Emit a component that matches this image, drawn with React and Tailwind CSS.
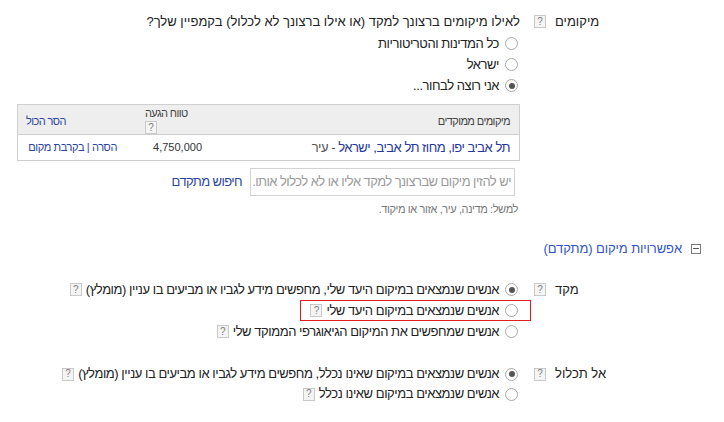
import React from 'react'

const font = { fontFamily: '"Liberation Sans", Arial, sans-serif' }

function Help() {
  return (
    <span className="inline-flex h-[13px] w-[12px] shrink-0 items-center justify-center border border-[#c9c9c9] bg-[#f4f4f4] text-[10px] leading-none tracking-normal text-[#808080]">
      ?
    </span>
  )
}

function Radio({ checked }) {
  return (
    <span className="ml-[6px] mr-[2px] flex h-[13px] w-[13px] shrink-0 items-center justify-center rounded-full border border-[#a8a8a8] bg-white">
      {checked && <span className="h-[6px] w-[6px] rounded-full bg-[#555]" />}
    </span>
  )
}

function Option({ checked, children, help, h = 'h-[21px]' }) {
  return (
    <div className={`flex ${h} items-center`}>
      <Radio checked={checked} />
      <span className="whitespace-nowrap tracking-[-0.45px]">{children}</span>
      {help && <span className="mr-[4px] flex"><Help /></span>}
    </div>
  )
}

function Label({ children, h = 'h-[17px]' }) {
  return (
    <div className="flex shrink-0">
      <div className={`flex ${h} w-[146px] items-center justify-end whitespace-nowrap`}>{children}</div>
      <div className={`mr-[9px] ml-[14px] flex ${h} items-center`}><Help /></div>
    </div>
  )
}

export default function App() {
  return (
    <div dir="rtl" style={font} className="h-[422px] w-[724px] bg-white pl-[17px] pr-[23px] pt-[13px] text-[13px] text-[#222]">
      {/* locations */}
      <div className="flex">
        <Label>מיקומים</Label>
        <div className="flex-1">
          <div className="flex h-[17px] items-center whitespace-nowrap">
            לאילו מיקומים ברצונך למקד (או אילו ברצונך לא לכלול) בקמפיין שלך?
          </div>
          <div className="mt-[3px]">
            <Option>כל המדינות והטריטוריות</Option>
            <Option>ישראל</Option>
            <Option checked>אני רוצה לבחור...</Option>
          </div>

          <div className="mt-[8px] border border-[#cfcfcf]">
            <div className="flex h-[30px] border-b border-[#cfcfcf] bg-[#eeeeee] text-[11px] tracking-[-0.6px] text-[#444]">
              <div className="flex flex-1 items-center pr-[9px] pt-[3px]">מיקומים ממוקדים</div>
              <div className="flex w-[85px] flex-col items-end justify-center pl-[19px] pt-[1px] leading-[14px]">
                <span>טווח הגעה</span>
                <span className="mt-[1px] flex"><Help /></span>
              </div>
              <div className="flex w-[108px] items-center justify-end pl-[8px] pt-[3px] text-[#2a44a0]">הסר הכול</div>
            </div>
            <div className="flex h-[25px] items-center">
              <div className="flex-1 whitespace-nowrap pr-[9px] tracking-[-0.5px]">
                <span className="text-[#24379a]">תל אביב יפו, מחוז תל אביב, ישראל</span>
                <span className="text-[#555]"> - עיר</span>
              </div>
              <div className="w-[85px] pr-[9px] text-[11px] text-[#333]">4,750,000</div>
              <div className="w-[108px] whitespace-nowrap pr-[9px] text-[11px] tracking-[-0.4px] text-[#2a44a0]">
                הסרה | בקרבת מקום
              </div>
            </div>
          </div>

          <div className="mt-[7px] flex items-center">
            <div className="mr-[5px] flex h-[28px] w-[265px] shrink-0 items-center overflow-hidden whitespace-nowrap border border-[#d3d3d3] pr-[3px] text-[13px] tracking-[-0.55px] text-[#9a9a9a]">
              יש להזין מיקום שברצונך למקד אליו או לא לכלול אותו.
            </div>
            <a className="mr-[8px] tracking-[-0.6px] text-[#2a44a0]">חיפוש מתקדם</a>
          </div>
          <div className="mt-[6px] h-[14px] pr-[2px] text-[11px] leading-[14px] tracking-[-0.4px] text-[#777]">
            למשל: מדינה, עיר, אזור או מיקוד.
          </div>
        </div>
      </div>

      {/* advanced */}
      <div className="mt-[24px] flex h-[17px] items-center">
        <span className="flex h-[10px] w-[10px] items-center justify-center border border-[#7a7a7a]">
          <span className="h-px w-[6px] bg-[#555]" />
        </span>
        <span className="mr-[9px] text-[13px] tracking-[-0.1px] text-[#3155c4]">אפשרויות מיקום (מתקדם)</span>
      </div>

      <div className="mt-[22px] flex">
        <Label h="h-[21px]">מקד</Label>
        <div className="flex-1">
          <Option checked help>אנשים שנמצאים במיקום היעד שלי, מחפשים מידע לגביו או מביעים בו עניין (מומלץ)</Option>
          <div className="flex">
            <div className="-mr-[11px] -ml-[10px] flex h-[21px] items-center border border-[#e02020] pl-[9px] pr-[10px]">
              <Radio />
              <span className="whitespace-nowrap tracking-[-0.45px]">אנשים שנמצאים במיקום היעד שלי</span>
              <span className="mr-[4px] flex"><Help /></span>
            </div>
          </div>
          <Option help>אנשים שמחפשים את המיקום הגיאוגרפי הממוקד שלי</Option>
        </div>
      </div>

      <div className="mt-[22px] flex">
        <Label h="h-[20px]">אל תכלול</Label>
        <div className="flex-1">
          <Option checked help h="h-[20px]">אנשים שנמצאים במיקום שאינו נכלל, מחפשים מידע לגביו או מביעים בו עניין (מומלץ)</Option>
          <Option help h="h-[20px]">אנשים שנמצאים במיקום שאינו נכלל</Option>
        </div>
      </div>
    </div>
  )
}
